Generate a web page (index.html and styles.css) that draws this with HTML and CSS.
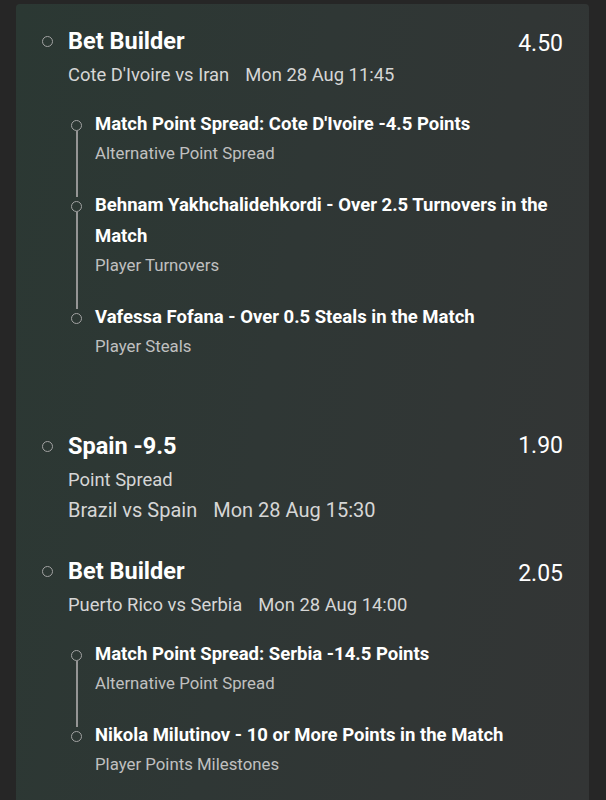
FILE: index.html
```html
<!DOCTYPE html>
<html>
<head>
<meta charset="utf-8">
<link rel="stylesheet" href="styles.css">
</head>
<body>
<div class="card">
  <div class="bet bet-builder">
    <div class="bet-head">
      <span class="dot"></span>
      <span class="bet-title">Bet Builder</span>
      <span class="odds">4.50</span>
    </div>
    <div class="bet-body">
      <div class="meta"><span class="match">Cote D'Ivoire vs Iran</span><span class="date">Mon 28 Aug 11:45</span></div>
      <ul class="legs">
        <li class="leg">
          <span class="leg-dot"></span>
          <div class="leg-text">
            <div class="leg-title">Match Point Spread: Cote D'Ivoire -4.5 Points</div>
            <div class="leg-sub">Alternative Point Spread</div>
          </div>
        </li>
        <li class="leg">
          <span class="leg-dot"></span>
          <div class="leg-text">
            <div class="leg-title">Behnam Yakhchalidehkordi - Over 2.5 Turnovers in the Match</div>
            <div class="leg-sub">Player Turnovers</div>
          </div>
        </li>
        <li class="leg">
          <span class="leg-dot"></span>
          <div class="leg-text">
            <div class="leg-title">Vafessa Fofana - Over 0.5 Steals in the Match</div>
            <div class="leg-sub">Player Steals</div>
          </div>
        </li>
      </ul>
    </div>
  </div>

  <div class="bet">
    <div class="bet-head">
      <span class="dot"></span>
      <span class="bet-title">Spain -9.5</span>
      <span class="odds">1.90</span>
    </div>
    <div class="bet-body">
      <div class="meta">Point Spread</div>
      <div class="meta meta-lg"><span class="match">Brazil vs Spain</span><span class="date">Mon 28 Aug 15:30</span></div>
    </div>
  </div>

  <div class="bet bet-builder">
    <div class="bet-head">
      <span class="dot"></span>
      <span class="bet-title">Bet Builder</span>
      <span class="odds">2.05</span>
    </div>
    <div class="bet-body">
      <div class="meta"><span class="match">Puerto Rico vs Serbia</span><span class="date">Mon 28 Aug 14:00</span></div>
      <ul class="legs">
        <li class="leg">
          <span class="leg-dot"></span>
          <div class="leg-text">
            <div class="leg-title">Match Point Spread: Serbia -14.5 Points</div>
            <div class="leg-sub">Alternative Point Spread</div>
          </div>
        </li>
        <li class="leg">
          <span class="leg-dot"></span>
          <div class="leg-text">
            <div class="leg-title">Nikola Milutinov - 10 or More Points in the Match</div>
            <div class="leg-sub">Player Points Milestones</div>
          </div>
        </li>
      </ul>
    </div>
  </div>
</div>
</body>
</html>
```

FILE: styles.css
```css
html, body {
  margin: 0;
  padding: 0;
  background: #262626;
  height: 100%;
  overflow: hidden;
}
body {
  font-family: Roboto, "Liberation Sans", sans-serif;
  color: #ffffff;
  padding: 4px 17px 0 16px;
  box-sizing: border-box;
}
.card {
  background: linear-gradient(100deg, #2b3833 0%, #2f3735 45%, #333535 100%);
  border-radius: 4px 4px 0 0;
  min-height: 100%;
  padding: 22px 26px 0 26px;
  box-sizing: border-box;
}
.bet {
  padding-bottom: 31px;
}
.bet:last-child {
  padding-bottom: 0;
}
.bet-head {
  display: flex;
  align-items: center;
  height: 30px;
}
.dot {
  width: 11px;
  height: 11px;
  box-sizing: border-box;
  border: 1.5px solid #a3a3a3;
  border-radius: 50%;
  flex: none;
  margin-right: 15px;
}
.bet-title {
  flex: 1;
  font-size: 23.5px;
  font-weight: 700;
  line-height: 30px;
}
.odds {
  font-size: 23px;
  font-weight: 400;
  line-height: 30px;
}
.bet-builder .odds {
  margin-top: 5px;
}
.bet-body {
  padding-left: 26px;
  margin-top: 4px;
}
.meta {
  font-size: 18.4px;
  line-height: 30px;
  color: #d6d6d6;
}
.meta-lg {
  font-size: 20px;
}
.match {
  margin-right: 16px;
}
.legs {
  list-style: none;
  margin: 19px 0 0 3px;
  padding: 0 0 41px 0;
}
.bet:last-child .legs {
  padding-bottom: 0;
}
.leg {
  display: flex;
  position: relative;
  margin-bottom: 24px;
}
.leg:last-child {
  margin-bottom: 0;
}
.leg::before {
  content: "";
  position: absolute;
  left: 4.5px;
  top: 22px;
  bottom: -31px;
  width: 2px;
  background: #959595;
}
.leg:last-child::before {
  display: none;
}
.leg-dot {
  width: 11px;
  height: 11px;
  box-sizing: border-box;
  border: 1.5px solid #a3a3a3;
  border-radius: 50%;
  flex: none;
  margin-top: 11px;
  margin-right: 13px;
}
.leg-title {
  font-size: 18.5px;
  font-weight: 700;
  line-height: 31px;
}
.leg-sub {
  font-size: 16.8px;
  line-height: 26px;
  color: #c0c0c0;
}
```
